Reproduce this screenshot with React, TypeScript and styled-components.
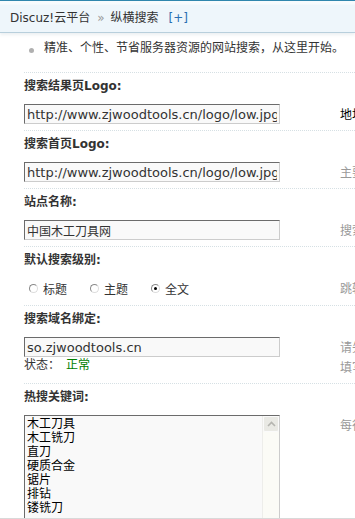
import React from 'react';
import styled, { createGlobalStyle } from 'styled-components';

const GlobalStyle = createGlobalStyle`
  html, body { margin: 0; padding: 0; background: #fff; overflow: hidden; }
  body {
    font-family: "DejaVu Sans", "Noto Sans CJK SC", sans-serif;
    font-size: 12px;
    color: #333;
  }
`;

const Page = styled.div`
  width: 355px;
  height: 519px;
  overflow: hidden;
  position: relative;
`;

const Header = styled.div`
  box-sizing: border-box;
  height: 33px;
  border-top: 1px solid #2f86ad;
  border-bottom: 1px solid #b8cfdc;
  background: linear-gradient(#f7fbfd 0, #f7fbfd 3px, #eef6fb 4px, #eef6fb 100%);
  box-shadow: 0 2px 3px rgba(150, 170, 185, 0.18);
  padding: 3px 0 0 10px;
  line-height: 28px;
  white-space: nowrap;
  color: #333;
`;

const Sep = styled.span`
  color: #999;
  margin: 0 6px 0 7px;
`;

const AddLink = styled.span`
  color: #2a6fb2;
  margin-left: 10px;
`;

const Intro = styled.ul`
  list-style: none;
  margin: 0;
  box-sizing: border-box;
  height: 39px;
  padding: 6px 0 0 44px;
  line-height: 16px;
  white-space: nowrap;
  font-family: "Noto Sans CJK SC", sans-serif;
`;

const IntroItem = styled.li`
  position: relative;
  &::before {
    content: "";
    position: absolute;
    left: -15px;
    top: 9px;
    width: 5px;
    height: 5px;
    border-radius: 50%;
    background: #b0b0b0;
  }
`;

const Form = styled.div`
  padding-left: 24px;
`;

const Section = styled.div`
  border-top: 1px dotted #d6e0e4;
`;

const Label = styled.div`
  padding-top: 5px;
  line-height: 16px;
  font-weight: bold;
  color: #333;
  white-space: nowrap;
`;

const Row = styled.div`
  display: flex;
  margin-top: 10px;
  padding-bottom: 6px;
`;

const Field = styled.div`
  flex: none;
  width: 316px;
`;

const Tip = styled.div<{ $dark?: boolean }>`
  line-height: 20px;
  white-space: nowrap;
  font-family: "Noto Sans CJK SC", sans-serif;
  color: ${p => (p.$dark ? '#000' : '#999')};
`;

const TextInput = styled.input<{ $cjk?: boolean }>`
  display: block;
  box-sizing: border-box;
  width: 256px;
  height: 20px;
  margin: 0;
  padding: 0 2px;
  border: 1px solid;
  border-color: #6b6b6b #cccccc #cccccc #6b6b6b;
  background: #f9f9f9;
  color: #333;
  outline: none;
  font-family: ${p => (p.$cjk ? '"Noto Sans CJK SC", sans-serif' : '"DejaVu Sans", "Noto Sans CJK SC", sans-serif')};
  font-size: ${p => (p.$cjk ? '12px' : '13px')};
`;

const Status = styled.div`
  line-height: 14px;
  font-family: "Noto Sans CJK SC", sans-serif;
  color: #333;
`;

const StatusOk = styled.span`
  color: #008000;
  margin-left: 6px;
`;

const RadioRow = styled.div`
  display: flex;
  align-items: center;
  height: 21px;
  padding-left: 5px;
`;

const RadioItem = styled.label`
  display: inline-flex;
  align-items: center;
  width: 61px;
  font-family: "Noto Sans CJK SC", sans-serif;
  color: #333;
`;

const Radio = styled.input`
  appearance: none;
  -webkit-appearance: none;
  box-sizing: border-box;
  width: 9px;
  height: 9px;
  margin: 0 5px 0 0;
  border: 1px solid;
  border-color: #8a8a8a #dcdcdc #dcdcdc #8a8a8a;
  border-radius: 50%;
  background: #fff;
  position: relative;
  &:checked::after {
    content: "";
    position: absolute;
    left: 2px;
    top: 2px;
    width: 3px;
    height: 3px;
    border-radius: 50%;
    background: #000;
  }
`;

const AreaBox = styled.div`
  display: flex;
  box-sizing: border-box;
  width: 256px;
  height: 112px;
  border: 1px solid;
  border-color: #6b6b6b #cccccc #cccccc #6b6b6b;
  background: #f9f9f9;
`;

const Area = styled.textarea`
  flex: 1;
  margin: 0;
  padding: 0 2px;
  border: none;
  background: transparent;
  resize: none;
  overflow: hidden;
  outline: none;
  font-family: "Noto Sans CJK SC", sans-serif;
  font-size: 12px;
  line-height: 14px;
  color: #000;
`;

const ScrollBar = styled.div`
  flex: none;
  width: 16px;
  background: #fbfbf6;
  border-left: 1px solid #ededea;
`;

const ScrollUp = styled.div`
  box-sizing: border-box;
  height: 16px;
  border: 1px solid #fafafa;
  border-radius: 2px;
  background: #e9e9e4;
  display: flex;
  align-items: center;
  justify-content: center;
`;

const BottomEdge = styled.div`
  position: absolute;
  left: 0;
  right: 0;
  bottom: 0;
  height: 1px;
  background: #d9d9d9;
`;

export default function App() {
  return (
    <Page>
      <GlobalStyle />
      <Header>
        Discuz!云平台<Sep>»</Sep>纵横搜索<AddLink>[+]</AddLink>
      </Header>
      <Intro>
        <IntroItem>精准、个性、节省服务器资源的网站搜索，从这里开始。</IntroItem>
      </Intro>
      <Form>
        <Section>
          <Label>搜索结果页Logo:</Label>
          <Row>
            <Field>
              <TextInput defaultValue="http://www.zjwoodtools.cn/logo/low.jpg" />
            </Field>
            <Tip $dark>地址</Tip>
          </Row>
        </Section>
        <Section>
          <Label>搜索首页Logo:</Label>
          <Row>
            <Field>
              <TextInput defaultValue="http://www.zjwoodtools.cn/logo/low.jpg" />
            </Field>
            <Tip>主要</Tip>
          </Row>
        </Section>
        <Section>
          <Label>站点名称:</Label>
          <Row>
            <Field>
              <TextInput $cjk defaultValue="中国木工刀具网" />
            </Field>
            <Tip>搜索</Tip>
          </Row>
        </Section>
        <Section>
          <Label>默认搜索级别:</Label>
          <Row>
            <Field>
              <RadioRow>
                <RadioItem><Radio type="radio" name="level" />标题</RadioItem>
                <RadioItem><Radio type="radio" name="level" />主题</RadioItem>
                <RadioItem><Radio type="radio" name="level" defaultChecked />全文</RadioItem>
              </RadioRow>
            </Field>
            <Tip>跳转</Tip>
          </Row>
        </Section>
        <Section>
          <Label>搜索域名绑定:</Label>
          <Row>
            <Field>
              <TextInput defaultValue="so.zjwoodtools.cn" />
              <Status>状态：<StatusOk>正常</StatusOk></Status>
            </Field>
            <Tip>请先<br />填写</Tip>
          </Row>
        </Section>
        <Section>
          <Label>热搜关键词:</Label>
          <Row>
            <Field>
              <AreaBox>
                <Area defaultValue={'木工刀具\n木工铣刀\n直刀\n硬质合金\n锯片\n排钻\n镂铣刀\n'} />
                <ScrollBar>
                  <ScrollUp>
                    <svg width="9" height="6" viewBox="0 0 9 6">
                      <path d="M1 5 L4.5 1.5 L8 5" fill="none" stroke="#b5b5b0" strokeWidth="1.6" />
                    </svg>
                  </ScrollUp>
                </ScrollBar>
              </AreaBox>
            </Field>
            <Tip>每行</Tip>
          </Row>
        </Section>
      </Form>
      <BottomEdge />
    </Page>
  );
}
